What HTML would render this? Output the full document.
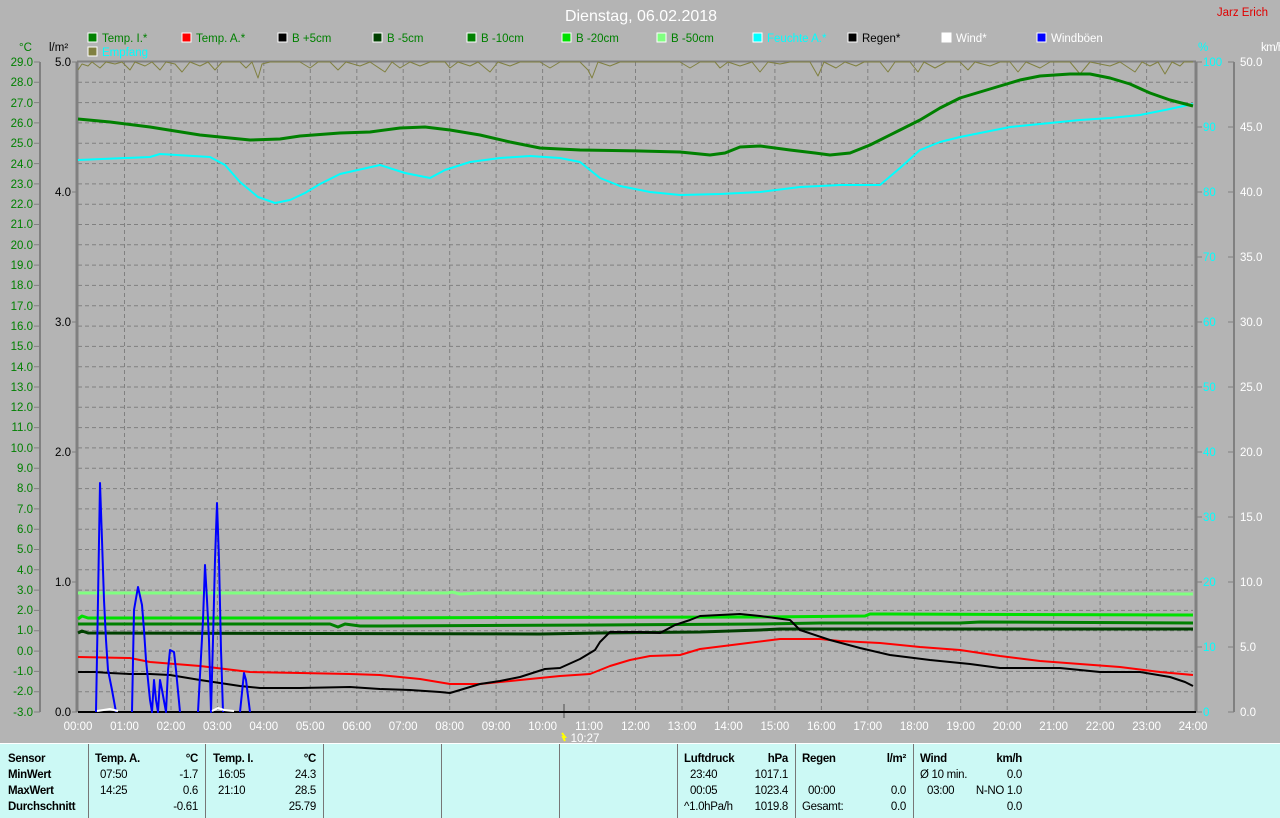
<!DOCTYPE html>
<html><head><meta charset="utf-8"><style>
body{margin:0;width:1280px;height:817px;background:#b4b4b4;overflow:hidden;font-family:"Liberation Sans",sans-serif}
svg{position:absolute;left:0;top:0}
.p{position:absolute;left:0;top:743px;width:1280px;height:74px;background:#ccf9f5;border-top:1px solid #fff}
.t{position:absolute;font-size:11.5px;color:#000;letter-spacing:-0.3px;white-space:nowrap}
.b{font-weight:bold}
.r{text-align:right}
.d{position:absolute;top:0;width:1px;height:74px;background:#777}
</style></head><body>
<svg width="1280" height="743" font-family="Liberation Sans, sans-serif">
<rect x="0" y="0" width="1280" height="743" fill="#b4b4b4"/>
<text x="641" y="21" fill="#fff" font-size="16" text-anchor="middle">Dienstag, 06.02.2018</text>
<text x="1268" y="16" fill="#e00000" font-size="11.5" text-anchor="end">Jarz Erich</text>
<g font-size="11.5">
<rect x="88" y="33" width="9" height="9" fill="#008000" stroke="#fff"/><text x="102" y="42" fill="#008000">Temp. I.*</text>
<rect x="182" y="33" width="9" height="9" fill="#f00" stroke="#fff"/><text x="196" y="42" fill="#008000">Temp. A.*</text>
<rect x="278" y="33" width="9" height="9" fill="#000" stroke="#fff"/><text x="292" y="42" fill="#008000">B +5cm</text>
<rect x="373" y="33" width="9" height="9" fill="#004000" stroke="#fff"/><text x="387" y="42" fill="#008000">B -5cm</text>
<rect x="467" y="33" width="9" height="9" fill="#008000" stroke="#fff"/><text x="481" y="42" fill="#008000">B -10cm</text>
<rect x="562" y="33" width="9" height="9" fill="#00e000" stroke="#fff"/><text x="576" y="42" fill="#008000">B -20cm</text>
<rect x="657" y="33" width="9" height="9" fill="#80ff80" stroke="#fff"/><text x="671" y="42" fill="#008000">B -50cm</text>
<rect x="753" y="33" width="9" height="9" fill="#0ff" stroke="#fff"/><text x="767" y="42" fill="#0ff">Feuchte A.*</text>
<rect x="848" y="33" width="9" height="9" fill="#000" stroke="#fff"/><text x="862" y="42" fill="#000">Regen*</text>
<rect x="942" y="33" width="9" height="9" fill="#fff" stroke="#fff"/><text x="956" y="42" fill="#fff">Wind*</text>
<rect x="1037" y="33" width="9" height="9" fill="#00f" stroke="#fff"/><text x="1051" y="42" fill="#fff">Windböen</text>
<rect x="88" y="47" width="9" height="9" fill="#808040" stroke="#fff"/><text x="102" y="56" fill="#0ff">Empfang</text>
<text x="19" y="51" fill="#008000">°C</text>
<text x="49" y="51" fill="#000">l/m²</text>
<text x="1198" y="51" fill="#0ff">%</text>
<text x="1261" y="51" fill="#fff" letter-spacing="-0.6">km/h</text>
</g>
<!-- grid -->
<g stroke="#808080" stroke-dasharray="4,3" stroke-width="1">
<path d="M78 82.3H1193M78 102.6H1193M78 122.9H1193M78 143.2H1193M78 163.6H1193M78 183.9H1193M78 204.2H1193M78 224.5H1193M78 244.8H1193M78 265.1H1193M78 285.4H1193M78 305.7H1193M78 326.1H1193M78 346.4H1193M78 366.7H1193M78 387H1193M78 407.3H1193M78 427.6H1193M78 447.9H1193M78 468.2H1193M78 488.6H1193M78 508.9H1193M78 529.2H1193M78 549.5H1193M78 569.8H1193M78 590.1H1193M78 610.4H1193M78 630.7H1193M78 651.1H1193M78 671.4H1193M78 691.7H1193"/>
<path d="M124.5 62V712M171 62V712M217.4 62V712M263.8 62V712M310.3 62V712M356.8 62V712M403.2 62V712M449.7 62V712M496.1 62V712M542.6 62V712M589.1 62V712M635.5 62V712M682 62V712M728.4 62V712M774.9 62V712M821.4 62V712M867.8 62V712M914.3 62V712M960.7 62V712M1007.2 62V712M1053.7 62V712M1100.1 62V712M1146.6 62V712"/>
</g>
<!-- axes -->
<g stroke="#808080" fill="none">
<path d="M40 62V712" stroke-width="2"/>
<path d="M77 62V712" stroke-width="3"/>
<path d="M1196 62V712" stroke-width="3"/>
<path d="M1234 62V712" stroke-width="2"/>
<path d="M77 61.5H1196" stroke-width="2"/>
<path d="M34 62h6M34 82.3h6M34 102.6h6M34 122.9h6M34 143.2h6M34 163.6h6M34 183.9h6M34 204.2h6M34 224.5h6M34 244.8h6M34 265.1h6M34 285.4h6M34 305.7h6M34 326.1h6M34 346.4h6M34 366.7h6M34 387h6M34 407.3h6M34 427.6h6M34 447.9h6M34 468.2h6M34 488.6h6M34 508.9h6M34 529.2h6M34 549.5h6M34 569.8h6M34 590.1h6M34 610.4h6M34 630.7h6M34 651.1h6M34 671.4h6M34 691.7h6M34 712h6"/>
<path d="M72 62h5M72 192h5M72 322h5M72 452h5M72 582h5M72 712h5"/>
<path d="M1196 62h6M1196 127h6M1196 192h6M1196 257h6M1196 322h6M1196 387h6M1196 452h6M1196 517h6M1196 582h6M1196 647h6M1196 712h6"/>
<path d="M1228 62h6M1228 127h6M1228 192h6M1228 257h6M1228 322h6M1228 387h6M1228 452h6M1228 517h6M1228 582h6M1228 647h6M1228 712h6"/>
<path d="M564 704V718" stroke-width="2"/>
</g>
<path d="M78 712H1196" stroke="#000" stroke-width="2"/>
<g font-size="11.5" fill="#008000" text-anchor="end">
<text x="33" y="66">29.0</text><text x="33" y="86">28.0</text><text x="33" y="107">27.0</text><text x="33" y="127">26.0</text><text x="33" y="147">25.0</text><text x="33" y="168">24.0</text><text x="33" y="188">23.0</text><text x="33" y="208">22.0</text><text x="33" y="228">21.0</text><text x="33" y="249">20.0</text><text x="33" y="269">19.0</text><text x="33" y="289">18.0</text><text x="33" y="310">17.0</text><text x="33" y="330">16.0</text><text x="33" y="350">15.0</text><text x="33" y="371">14.0</text><text x="33" y="391">13.0</text><text x="33" y="411">12.0</text><text x="33" y="431">11.0</text><text x="33" y="452">10.0</text><text x="33" y="472">9.0</text><text x="33" y="492">8.0</text><text x="33" y="513">7.0</text><text x="33" y="533">6.0</text><text x="33" y="553">5.0</text><text x="33" y="574">4.0</text><text x="33" y="594">3.0</text><text x="33" y="614">2.0</text><text x="33" y="634">1.0</text><text x="33" y="655">0.0</text><text x="33" y="675">-1.0</text><text x="33" y="695">-2.0</text><text x="33" y="716">-3.0</text>
</g>
<g font-size="11.5" fill="#000" text-anchor="end">
<text x="71" y="66">5.0</text><text x="71" y="196">4.0</text><text x="71" y="326">3.0</text><text x="71" y="456">2.0</text><text x="71" y="586">1.0</text><text x="71" y="716">0.0</text>
</g>
<g font-size="11.5" fill="#0ff">
<text x="1203" y="66">100</text><text x="1203" y="131">90</text><text x="1203" y="196">80</text><text x="1203" y="261">70</text><text x="1203" y="326">60</text><text x="1203" y="391">50</text><text x="1203" y="456">40</text><text x="1203" y="521">30</text><text x="1203" y="586">20</text><text x="1203" y="651">10</text><text x="1203" y="716">0</text>
</g>
<g font-size="11.5" fill="#fff">
<text x="1240" y="66">50.0</text><text x="1240" y="131">45.0</text><text x="1240" y="196">40.0</text><text x="1240" y="261">35.0</text><text x="1240" y="326">30.0</text><text x="1240" y="391">25.0</text><text x="1240" y="456">20.0</text><text x="1240" y="521">15.0</text><text x="1240" y="586">10.0</text><text x="1240" y="651">5.0</text><text x="1240" y="716">0.0</text>
</g>
<g font-size="11.5" fill="#fff" text-anchor="middle">
<text x="78" y="730">00:00</text><text x="124.5" y="730">01:00</text><text x="171" y="730">02:00</text><text x="217.4" y="730">03:00</text><text x="263.8" y="730">04:00</text><text x="310.3" y="730">05:00</text><text x="356.8" y="730">06:00</text><text x="403.2" y="730">07:00</text><text x="449.7" y="730">08:00</text><text x="496.1" y="730">09:00</text><text x="542.6" y="730">10:00</text><text x="589.1" y="730">11:00</text><text x="635.5" y="730">12:00</text><text x="682" y="730">13:00</text><text x="728.4" y="730">14:00</text><text x="774.9" y="730">15:00</text><text x="821.4" y="730">16:00</text><text x="867.8" y="730">17:00</text><text x="914.3" y="730">18:00</text><text x="960.7" y="730">19:00</text><text x="1007.2" y="730">20:00</text><text x="1053.7" y="730">21:00</text><text x="1100.1" y="730">22:00</text><text x="1146.6" y="730">23:00</text><text x="1193" y="730">24:00</text>
<text x="585" y="742">10:27</text>
</g>
<path d="M562 733l3 4h-2l2 4" stroke="#ff0" stroke-width="2" fill="none"/>
<!-- data -->
<g fill="none" stroke-linejoin="round">
<polyline stroke="#808040" stroke-width="1" points="78,70 82,64 88,66 92,62 100,68 106,62 115,64 122,62 130,70 135,62 145,66 152,62 160,70 166,62 175,64 182,72 190,62 200,66 208,62 215,70 222,62 240,62 246,68 252,62 258,78 262,64 270,62 300,62 310,68 318,62 330,62 338,70 346,62 360,66 370,62 385,72 392,62 400,68 410,62 420,66 430,62 445,62 450,68 458,62 470,66 478,62 490,72 498,62 510,66 520,62 540,62 550,68 560,62 580,62 588,70 592,78 598,62 610,66 620,62 680,62 690,68 700,62 715,62 720,68 728,62 740,66 752,62 760,72 768,62 780,64 790,62 810,62 818,76 824,62 836,68 845,62 856,66 864,62 880,62 888,72 895,62 910,62 918,72 924,62 935,68 946,62 960,62 968,70 975,62 990,66 1000,62 1010,62 1018,72 1026,62 1040,68 1050,62 1070,62 1080,74 1090,62 1110,66 1120,62 1135,72 1142,62 1150,66 1158,62 1165,74 1172,62 1180,66 1184,62 1193,62"/>
<polyline stroke="#80ff80" stroke-width="3" points="78,593 448,593 452,592 460,594 480,593 1193,594"/>
<polyline stroke="#00e000" stroke-width="3" points="78,619 82,616 88,618 300,618 760,617 865,616 870,614 1193,615"/>
<polyline stroke="#008000" stroke-width="3" points="78,624 330,624 338,627 345,624 360,626 380,626 600,625 760,624 820,623 960,623 980,622 1193,623"/>
<polyline stroke="#004000" stroke-width="3" points="78,633 82,631 88,633 540,634 600,633 700,632 760,630 780,629 960,629 1193,629"/>
<polyline stroke="#0ff" stroke-width="2" points="78,160 150,157 160,154 210,157 225,165 240,182 258,197 275,203 290,200 305,193 320,184 340,174 380,165 405,173 430,178 445,170 470,162 500,158 530,156 560,158 580,162 600,178 620,186 650,192 680,195 720,194 760,192 800,187 840,185 880,185 900,168 920,150 940,142 960,137 990,131 1010,127 1050,123 1080,120 1110,118 1140,115 1165,110 1193,104"/>
<polyline stroke="#008000" stroke-width="3" points="78,119 110,122 150,127 200,135 250,140 280,139 300,136 340,133 370,132 400,128 425,127 450,130 480,135 510,142 540,148 580,150 640,151 680,152 710,155 725,153 740,147 760,146 790,150 815,153 830,155 850,153 870,145 900,130 920,120 940,108 960,98 980,92 1000,86 1020,80 1040,76 1070,74 1090,74 1110,78 1130,84 1150,93 1170,100 1193,106"/>
<polyline stroke="#f00" stroke-width="2" points="78,657 130,658 150,662 200,666 250,672 300,673 350,674 380,675 420,679 450,684 480,684 500,682 530,679 560,676 590,674 610,666 630,660 650,656 680,655 700,649 740,644 780,639 820,639 840,641 880,643 920,647 960,650 1000,656 1040,661 1080,664 1120,667 1160,672 1193,675"/>
<polyline stroke="#000" stroke-width="2" points="78,672 95,672 110,673 130,674 150,674 170,675 200,680 220,683 240,686 260,688 300,688 350,687 380,689 410,690 440,692 450,693 470,687 480,684 500,681 520,677 545,669 560,668 580,659 595,650 600,642 610,632 640,632 660,633 675,625 690,620 700,616 720,615 740,614 760,616 790,620 800,630 830,640 860,648 890,655 930,660 970,664 1000,668 1060,668 1100,672 1140,672 1170,677 1185,682 1193,686"/>
<polyline stroke="#00f" stroke-width="2" points="96,712 98,600 100,483 102,540 104,600 106,640 108,670 112,690 116,712"/>
<polyline stroke="#00f" stroke-width="2" points="132,712 134,610 138,587 142,605 144,630 146,660 150,700 152,712 154,680 156,700 158,712 160,680 162,690 166,712 168,670 170,650 174,652 176,670 180,712"/>
<polyline stroke="#00f" stroke-width="2" points="198,712 203,620 205,565 207,600 209,640 211,712 213,640 215,560 217,503 219,560 221,650 223,712"/>
<polyline stroke="#00f" stroke-width="2" points="240,712 244,673 246,680 250,712"/>
<polyline stroke="#fff" stroke-width="2" points="97,711 110,709 118,711"/>
<polyline stroke="#fff" stroke-width="2" points="212,711 218,708 224,710 234,711"/>
</g>
</svg>
<div class="p">
<div class="d" style="left:88px"></div><div class="d" style="left:205px"></div><div class="d" style="left:323px"></div><div class="d" style="left:441px"></div><div class="d" style="left:559px"></div><div class="d" style="left:677px"></div><div class="d" style="left:795px"></div><div class="d" style="left:913px"></div>
<div class="t b" style="left:8px;top:9px">Sensor</div>
<div class="t b" style="left:8px;top:25px">MinWert</div>
<div class="t b" style="left:8px;top:41px">MaxWert</div>
<div class="t b" style="left:8px;top:57px">Durchschnitt</div>
<div class="t b" style="left:95px;top:9px">Temp. A.</div>
<div class="t b r" style="left:160px;width:38px;top:9px">°C</div>
<div class="t" style="left:100px;top:25px">07:50</div><div class="t r" style="left:160px;width:38px;top:25px">-1.7</div>
<div class="t" style="left:100px;top:41px">14:25</div><div class="t r" style="left:160px;width:38px;top:41px">0.6</div>
<div class="t r" style="left:150px;width:48px;top:57px">-0.61</div>
<div class="t b" style="left:213px;top:9px">Temp. I.</div>
<div class="t b r" style="left:278px;width:38px;top:9px">°C</div>
<div class="t" style="left:218px;top:25px">16:05</div><div class="t r" style="left:278px;width:38px;top:25px">24.3</div>
<div class="t" style="left:218px;top:41px">21:10</div><div class="t r" style="left:278px;width:38px;top:41px">28.5</div>
<div class="t r" style="left:268px;width:48px;top:57px">25.79</div>
<div class="t b" style="left:684px;top:9px">Luftdruck</div>
<div class="t b r" style="left:748px;width:40px;top:9px">hPa</div>
<div class="t" style="left:690px;top:25px">23:40</div><div class="t r" style="left:738px;width:50px;top:25px">1017.1</div>
<div class="t" style="left:690px;top:41px">00:05</div><div class="t r" style="left:738px;width:50px;top:41px">1023.4</div>
<div class="t" style="left:684px;top:57px">^1.0hPa/h</div><div class="t r" style="left:738px;width:50px;top:57px">1019.8</div>
<div class="t b" style="left:802px;top:9px">Regen</div>
<div class="t b r" style="left:866px;width:40px;top:9px">l/m²</div>
<div class="t" style="left:808px;top:41px">00:00</div><div class="t r" style="left:866px;width:40px;top:41px">0.0</div>
<div class="t" style="left:802px;top:57px">Gesamt:</div><div class="t r" style="left:866px;width:40px;top:57px">0.0</div>
<div class="t b" style="left:920px;top:9px">Wind</div>
<div class="t b r" style="left:970px;width:52px;top:9px">km/h</div>
<div class="t" style="left:920px;top:25px">Ø 10 min.</div><div class="t r" style="left:970px;width:52px;top:25px">0.0</div>
<div class="t" style="left:927px;top:41px">03:00</div><div class="t r" style="left:960px;width:62px;top:41px">N-NO 1.0</div>
<div class="t r" style="left:970px;width:52px;top:57px">0.0</div>
</div>
</body></html>
